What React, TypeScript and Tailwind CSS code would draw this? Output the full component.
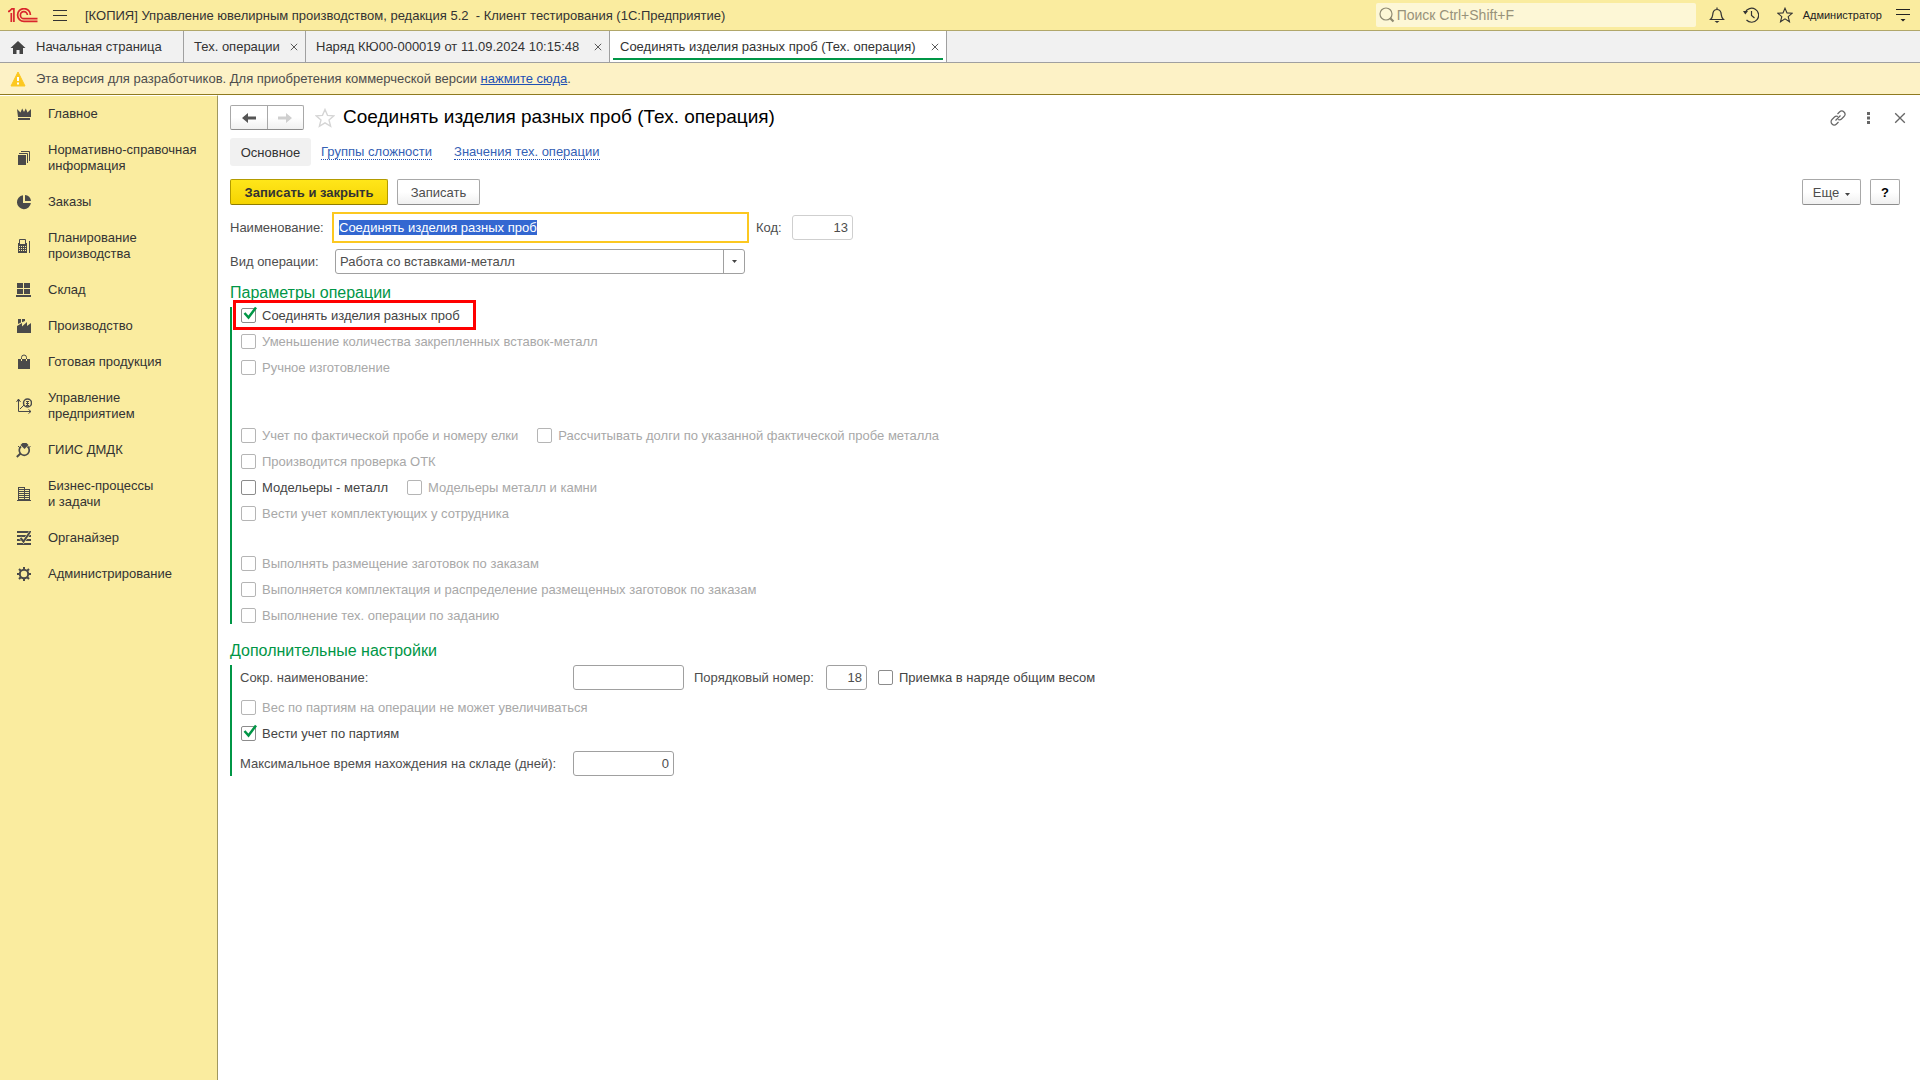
import React, { useEffect, useRef } from 'react';

const Logo = () => (
  <svg className="w-[30px] h-[15px]" viewBox="0 0 30 15" fill="none" stroke="#d9262c" strokeWidth="1.7">
    <path d="M0 3.4h1.2L3.6 1M3.3 14V5M5.9 14V.9H3.2" />
    <path d="M22.4 7A6.4 6.4 0 1 0 16 13.4H29.5" />
    <path d="M19.4 7A3.5 3.5 0 1 0 16 10.6H29.5" />
  </svg>
);

const StarIcon = ({ className }: { className: string }) => (
  <svg className={className} viewBox="0 0 16 16" fill="none" stroke="currentColor" strokeWidth="1.1">
    <path d="M8 1.2l2 4.7 5.1.4-3.9 3.3 1.3 5.1L8 11.9l-4.5 2.8 1.3-5.1L.9 6.3 6 5.9z" />
  </svg>
);

const CrossIcon = ({ className }: { className: string }) => (
  <svg className={className} viewBox="0 0 10 10" fill="none" stroke="currentColor" strokeWidth="1.1">
    <path d="M1 1l8 8M9 1L1 9" />
  </svg>
);

const Arrow = ({ flip }: { flip?: boolean }) => (
  <svg className={flip ? 'w-3.5 h-3 rotate-180' : 'w-3.5 h-3'} viewBox="0 0 14 12" fill="currentColor">
    <path d="M0 6l6-5v3.6h8v2.8H6V11z" />
  </svg>
);

const Caret = () => (
  <svg className="w-[5px] h-[3px]" viewBox="0 0 5 3" fill="#444">
    <path d="M0 0h5L2.5 3z" />
  </svg>
);

// section icons, all on a 16x16 grid
const icons: Record<string, React.ReactNode> = {
  crown: <path d="M1 3l3.5 3.5L6.2 2.6 8 6l1.8-3.4 1.7 3.9L15 3v8H2zM2 12h12v2H2z" />,
  books: (
    <>
      <path d="M2 5h8v10H2z" />
      <path d="M3 3.5h8.5V13M5 1.5h8.5V11" fill="none" stroke="#4a4a4a" />
    </>
  ),
  pie: <path d="M7 1.2V9h7.9A7 7 0 1 1 7 1.2zM9 1a6.3 6.3 0 0 1 6 6H9z" />,
  calc: (
    <>
      <path d="M3.5 6V1.5h6V6M13.5 3v12" fill="none" stroke="#4a4a4a" />
      <path d="M2 5h9v10H2z" />
      <path d="M3 8h1v1H3zM5 8h1v1H5zM7 8h1v1H7zM9 8h1v1H9zM3 10h1v1H3zM5 10h1v1H5zM7 10h1v1H7zM9 10h1v1H9zM3 12h1v1H3zM5 12h1v1H5zM7 12h1v1H7zM9 12h1v1H9zM4 5h5v1H4z" fill="#faec9f" />
    </>
  ),
  store: <path d="M1 1h6v5H1zM8 1h6v5H8zM1 7h6v5H1zM8 7h6v5H8zM0 13h15v2H0z" />,
  factory: <path d="M2 1h3v3.500L2 6zM6 1h3v2L6 4.300zM1 8l5-3v3.500L11 4v4l4-3v10H1z" />,
  bag: (
    <>
      <path d="M2 5h12v10H2z" />
      <path d="M5.500 5V3.500a2.500 2.500 0 0 1 5 0V5" fill="none" stroke="#4a4a4a" />
      <path d="M5.500 5v2M10.500 5v2" stroke="#faec9f" />
    </>
  ),
  chart: (
    <g fill="none" stroke="#4a4a4a">
      <path d="M2.500 1v12.500H15M.5 4l2-3 2 3M12.500 11.500l2.500 2-2.500 2M4 11l4-4" />
      <circle cx="11.500" cy="5" r="4" strokeWidth="1.500" />
      <path d="M10 3.500h3M10 5.500h3M10 7.500h3M11.500 3v5" />
    </g>
  ),
  ring: (
    <>
      <path d="M4.500 3l2-2h4l2 2-4 4z" />
      <path d="M5 4.500a5 5 0 1 0 6.500 0" fill="none" stroke="#4a4a4a" strokeWidth="1.700" />
      <path d="M4.500 11.500L.8 15" stroke="#4a4a4a" strokeWidth="2" />
      <path d="M2 4l2 2M14.500 4l-2 2" stroke="#4a4a4a" />
    </>
  ),
  buildings: (
    <>
      <path d="M2 1h7v13H2zM9 3h5v11H9zM1 14h14v1H1z" />
      <path d="M3 2.500h5M3 4.500h5M3 6.500h5M3 8.500h5M3 10.500h5M3 12.500h5M9 4.500h4M9 6.500h4M9 8.500h4M9 10.500h4M9 12.500h4" stroke="#faec9f" />
    </>
  ),
  organizer: (
    <>
      <path d="M1 1h14v2H1zM1 5h14v2H1zM1 9h14v2H1zM1 13h14v2H1z" />
      <path d="M4 7.500l3.500 4L14 2" fill="none" stroke="#faec9f" strokeWidth="3" />
      <path d="M4.500 8l3 3.500L14 2" fill="none" stroke="#4a4a4a" strokeWidth="2" />
    </>
  ),
  gear: (
    <g fill="none" stroke="#4a4a4a">
      <circle cx="8" cy="8" r="4.200" strokeWidth="2" />
      <path d="M8 1v2.500M8 12.500V15M1 8h2.500M12.500 8H15M3 3l2 2M11 11l2 2M13 3l-2 2M5 11l-2 2" strokeWidth="2" />
    </g>
  ),
};

const sections = [
  { icon: 'crown', lines: ['Главное'] },
  { icon: 'books', lines: ['Нормативно-справочная', 'информация'] },
  { icon: 'pie', lines: ['Заказы'] },
  { icon: 'calc', lines: ['Планирование', 'производства'] },
  { icon: 'store', lines: ['Склад'] },
  { icon: 'factory', lines: ['Производство'] },
  { icon: 'bag', lines: ['Готовая продукция'] },
  { icon: 'chart', lines: ['Управление', 'предприятием'] },
  { icon: 'ring', lines: ['ГИИС ДМДК'] },
  { icon: 'buildings', lines: ['Бизнес-процессы', 'и задачи'] },
  { icon: 'organizer', lines: ['Органайзер'] },
  { icon: 'gear', lines: ['Администрирование'] },
];

const Header = () => (
  <header className="h-[31px] shrink-0 flex items-center bg-[#faec9f] border-b border-[#b1a76a] pl-2 pr-2.5">
    <Logo />
    <button aria-label="Меню" className="ml-[15px] w-3.5 h-[11px] flex flex-col justify-between">
      <span className="w-full h-px bg-[#333]" />
      <span className="w-full h-px bg-[#333]" />
      <span className="w-full h-px bg-[#333]" />
    </button>
    <div className="ml-[18px] whitespace-pre">[КОПИЯ] Управление ювелирным производством, редакция 5.2  - Клиент тестирования (1С:Предприятие)</div>
    <div className="ml-auto w-80 h-6 flex items-center bg-[#fdf7d6] rounded-xs pl-[3px]">
      <svg className="w-4 h-4 shrink-0 text-[#8f8a72]" viewBox="0 0 16 16" fill="none" stroke="currentColor">
        <circle cx="7" cy="7" r="6" strokeWidth="1.200" />
        <path d="M11 11l3.500 3.500" strokeWidth="2.200" />
      </svg>
      <input type="search" aria-label="Поиск" placeholder="Поиск Ctrl+Shift+F" className="w-full pl-0.5 text-sm leading-5 bg-transparent outline-none placeholder:text-[#98927a]" />
    </div>
    <div className="ml-[13px] flex items-center gap-[18px] text-[#333]">
      <button aria-label="Уведомления">
        <svg className="w-4 h-4" viewBox="0 0 16 16" fill="none" stroke="currentColor" strokeWidth="1.200">
          <path d="M1.500 12.500h13C12 10.500 12.500 8 12 6 11.500 3.500 10 2.500 8 2.500S4.500 3.500 4 6c-.5 2 0 4.500-2.500 6.500zM8 2.500V.5" />
          <path d="M5.500 14h5L8 16z" fill="currentColor" stroke="none" />
        </svg>
      </button>
      <button aria-label="История">
        <svg className="w-4 h-4" viewBox="0 0 16 16" fill="none" stroke="currentColor" strokeWidth="1.200">
          <path d="M2.200 5.500A7 7 0 1 1 3.500 13M8.500 4v4.500l3 2.500" />
          <path d="M0 4h5L2.300 7.500z" fill="currentColor" stroke="none" />
        </svg>
      </button>
      <button aria-label="Избранное">
        <StarIcon className="w-4 h-4" />
      </button>
    </div>
    <span className="ml-2.5 text-[11px] text-[#222]">Администратор</span>
    <button aria-label="Сервис" className="ml-3.5">
      <svg className="w-3.5 h-3.5" viewBox="0 0 14 14" fill="#222">
        <path d="M0 1h14v1H0zM0 6h14v1H0zM4.500 11h5L7 13.500z" />
      </svg>
    </button>
  </header>
);

interface TabProps {
  title: string;
  width: string;
  active?: boolean;
}

const Tab = ({ title, width, active }: TabProps) => (
  <div className={`flex flex-col border-r border-[#a0a0a0] px-[3px] ${width} ${active ? 'bg-white' : ''}`}>
    <div className="flex-1 flex items-center justify-between pt-1 pl-[7px] pr-1">
      <button>{title}</button>
      <button aria-label="Закрыть вкладку">
        <CrossIcon className="w-2 h-2 text-[#444]" />
      </button>
    </div>
    <div className={`h-0.5 mb-0.5 ${active ? 'bg-[#009646]' : ''}`} />
  </div>
);

const TabBar = () => (
  <nav className="h-8 shrink-0 flex bg-[#f1f1f1] border-b border-[#a0a0a0]">
    <button className="min-w-[184px] flex items-center border-r border-[#a0a0a0] pl-[10px]">
      <svg className="w-4 h-4 mr-2.5" viewBox="0 0 16 16" fill="#444">
        <path d="M8 2l7.500 7H13v6H9.500v-4h-3v4H3V9H.5z" />
      </svg>
      Начальная страница
    </button>
    <Tab title="Тех. операции" width="min-w-[122px]" />
    <Tab title="Наряд КЮ00-000019 от 11.09.2024 10:15:48" width="min-w-[304px]" />
    <Tab title="Соединять изделия разных проб (Тех. операция)" width="min-w-[337px]" active />
  </nav>
);

const Notice = () => (
  <div className="h-8 shrink-0 flex items-center bg-[#fdf2c6] border-b border-[#8f7a20] pl-2.5 text-[#4d4d4d]">
    <svg className="w-4 h-4 mr-2.5" viewBox="0 0 16 16">
      <path d="M8 1l7 14H1z" fill="#fcc820" stroke="#fcc820" strokeLinejoin="round" />
      <path d="M7 6h2v4H7zM7 11.500h2v2H7z" fill="#fff" />
    </svg>
    <p>
      Эта версия для разработчиков. Для приобретения коммерческой версии <a href="#" className="text-[#1e50b4] underline">нажмите сюда</a>.
    </p>
  </div>
);

const Sidebar = () => (
  <aside className="w-[218px] shrink-0 bg-[#faec9f] border-r border-r-[#a0985f] border-t border-t-white">
    {sections.map((s) => (
      <button key={s.icon} className="w-full flex items-center py-2.5 pl-4 text-left leading-4">
        <svg className="w-4 h-4 mr-4 shrink-0" viewBox="0 0 16 16" fill="#4a4a4a">
          {icons[s.icon]}
        </svg>
        <span>
          {s.lines.map((line) => (
            <span key={line} className="block">{line}</span>
          ))}
        </span>
      </button>
    ))}
  </aside>
);

interface CheckProps {
  label: string;
  checked?: boolean;
  disabled?: boolean;
}

const Check = ({ label, checked, disabled }: CheckProps) => (
  <label className={`h-[26px] flex items-center gap-1.5 ${disabled ? 'text-[#a8a8a8]' : 'text-[#444]'}`}>
    <span className="relative flex">
      <input
        type="checkbox"
        defaultChecked={checked}
        disabled={disabled}
        className={`w-[15px] h-[15px] appearance-none bg-white border rounded-xs ${disabled ? 'border-[#b5b5b5]' : 'border-[#8c8c8c]'}`}
      />
      {checked && (
        <svg className="absolute left-0.5 -top-0.5 w-3.5 h-3.5 pointer-events-none" viewBox="0 0 14 14" fill="none" stroke="#009646" strokeWidth="2.500">
          <path d="M1.500 7l4 4.500L13 1.500" />
        </svg>
      )}
    </span>
    {label}
  </label>
);

const buttonStyle = 'border border-[#a8a8a8] border-b-[#8c8c8c] rounded-xs bg-linear-to-b from-white from-50% to-[#f0f0f0]';
const fieldStyle = 'h-[25px] border border-[#a0a0a0] rounded-[3px] bg-white px-1 outline-none';

export default function App() {
  const nameRef = useRef<HTMLInputElement>(null);

  useEffect(() => {
    nameRef.current?.focus();
    nameRef.current?.select();
  }, []);

  return (
    <div className="min-h-screen flex flex-col bg-white font-['Liberation_Sans',Arial,sans-serif] text-[13px] leading-[15px] text-[#333]">
      <Header />
      <TabBar />
      <Notice />
      <div className="flex-1 flex">
        <Sidebar />
        <main className="flex-1 pl-3 pr-5 pt-2.5 text-[#4d4d4d]">
          <div className="flex items-center h-[25px]">
            <div className={`flex w-[74px] h-full ${buttonStyle}`}>
              <button aria-label="Назад" className="flex-1 flex items-center justify-center border-r border-[#a8a8a8] text-[#555]">
                <Arrow />
              </button>
              <button aria-label="Вперед" className="flex-1 flex items-center justify-center text-[#cfcfcf]">
                <Arrow flip />
              </button>
            </div>
            <button aria-label="В избранное" className="ml-[11px] text-[#d5d5d5]">
              <StarIcon className="w-5 h-5" />
            </button>
            <h1 className="ml-2 pb-0.5 text-[19px] leading-6 text-black">Соединять изделия разных проб (Тех. операция)</h1>
            <div className="ml-auto flex items-center text-[#666]">
              <button aria-label="Ссылка">
                <svg className="w-4 h-4" viewBox="0 0 16 16" fill="none" stroke="currentColor" strokeWidth="1.200">
                  <path d="M7.500 4l2-2a3 3 0 0 1 4.500 4.500l-2.500 2.500a3 3 0 0 1-3.500.5M8.500 12l-2 2A3 3 0 0 1 2 9.500L4.500 7A3 3 0 0 1 8 6.500M5.500 10.500l5-5" />
                </svg>
              </button>
              <button aria-label="Дополнительно" className="ml-[21px]">
                <svg className="w-[3px] h-3" viewBox="0 0 3 12" fill="currentColor">
                  <path d="M0 0h3v3H0zM0 4.500h3v3H0zM0 9h3v3H0z" />
                </svg>
              </button>
              <button aria-label="Закрыть" className="ml-6 -mr-1.5">
                <CrossIcon className="w-3 h-3" />
              </button>
            </div>
          </div>

          <nav className="mt-2 flex items-center h-7">
            <button className="w-[81px] h-full rounded-[3px] bg-[#f1f1f1] text-[#333]">Основное</button>
            <a href="#" className="ml-2.5 border-b border-dotted border-[#1e50b4] text-[#3561b5]">Группы сложности</a>
            <a href="#" className="ml-[22px] border-b border-dotted border-[#1e50b4] text-[#3561b5]">Значения тех. операции</a>
          </nav>

          <div className="mt-[13px] flex h-[26px]">
            <button className="w-[158px] border border-[#b39b00] border-b-[#8f7c00] rounded-xs bg-linear-to-b from-[#ffe619] to-[#f5d400] font-bold text-[#333]">
              Записать и закрыть
            </button>
            <button className={`ml-[9px] w-[83px] ${buttonStyle}`}>Записать</button>
            <button className={`ml-auto w-[59px] flex items-center justify-center gap-1.5 ${buttonStyle}`}>
              Еще
              <span className="pt-1">
                <Caret />
              </span>
            </button>
            <button className={`ml-[9px] w-[30px] font-bold text-black ${buttonStyle}`}>?</button>
          </div>

          <div className="mt-[7px] flex items-center">
            <label htmlFor="name" className="w-[102px]">Наименование:</label>
            <input
              id="name"
              ref={nameRef}
              defaultValue="Соединять изделия разных проб"
              className="w-[417px] h-[31px] border-2 border-[#fcc820] pl-[5px] outline-none selection:bg-[#3367d1] selection:text-white"
            />
            <label htmlFor="code" className="ml-[7px] w-9">Код:</label>
            <input id="code" readOnly defaultValue="13" className="w-[61px] h-[25px] border border-[#cfcfcf] rounded-[3px] px-1 text-right outline-none" />
          </div>

          <div className="mt-1.5 flex items-center">
            <label htmlFor="kind" className="w-[105px]">Вид операции:</label>
            <div className="relative w-[410px]">
              <select id="kind" className={`w-full appearance-none ${fieldStyle}`}>
                <option>Работа со вставками-металл</option>
              </select>
              <span className="absolute right-0 top-0 w-[22px] h-full border-l border-[#a0a0a0] flex items-center justify-center pointer-events-none">
                <Caret />
              </span>
            </div>
          </div>

          <h2 className="mt-[9px] text-base leading-5 text-[#009646]">Параметры операции</h2>
          <section className="mt-1 border-l-2 border-[#009646] pl-[9px]">
            <div className="relative flex h-4 items-center">
              <Check label="Соединять изделия разных проб" checked />
              <div className="absolute -left-2 -top-[7px] w-[243px] h-[30px] border-3 border-[#ff0000] pointer-events-none" />
            </div>
            <div className="pt-[5px]">
              <Check label="Уменьшение количества закрепленных вставок-металл" disabled />
              <Check label="Ручное изготовление" disabled />
            </div>
            <div className="mt-[42px]">
              <div className="flex gap-[19px]">
                <Check label="Учет по фактической пробе и номеру елки" disabled />
                <Check label="Рассчитывать долги по указанной фактической пробе металла" disabled />
              </div>
              <Check label="Производится проверка ОТК" disabled />
              <div className="flex gap-[19px]">
                <Check label="Модельеры - металл" />
                <Check label="Модельеры металл и камни" disabled />
              </div>
              <Check label="Вести учет комплектующих у сотрудника" disabled />
            </div>
            <div className="mt-6 h-[74px]">
              <Check label="Выполнять размещение заготовок по заказам" disabled />
              <Check label="Выполняется комплектация и распределение размещенных заготовок по заказам" disabled />
              <Check label="Выполнение тех. операции по заданию" disabled />
            </div>
          </section>

          <h2 className="mt-[17px] text-base leading-5 text-[#009646]">Дополнительные настройки</h2>
          <section className="mt-1 border-l-2 border-[#009646] pl-2">
            <div className="flex items-center h-[25px]">
              <label htmlFor="short" className="w-[333px]">Сокр. наименование:</label>
              <input id="short" className={`w-[111px] ${fieldStyle}`} />
              <label htmlFor="order" className="ml-2.5 w-[132px]">Порядковый номер:</label>
              <input id="order" defaultValue="18" className={`w-[41px] text-right mr-[11px] ${fieldStyle}`} />
              <Check label="Приемка в наряде общим весом" />
            </div>
            <div className="mt-1 mb-[5px] pl-px">
              <Check label="Вес по партиям на операции не может увеличиваться" disabled />
              <Check label="Вести учет по партиям" checked />
            </div>
            <div className="flex items-center h-[25px]">
              <label htmlFor="days" className="w-[333px]">Максимальное время нахождения на складе (дней):</label>
              <input id="days" defaultValue="0" className={`w-[101px] text-right ${fieldStyle}`} />
            </div>
          </section>
        </main>
      </div>
    </div>
  );
}
